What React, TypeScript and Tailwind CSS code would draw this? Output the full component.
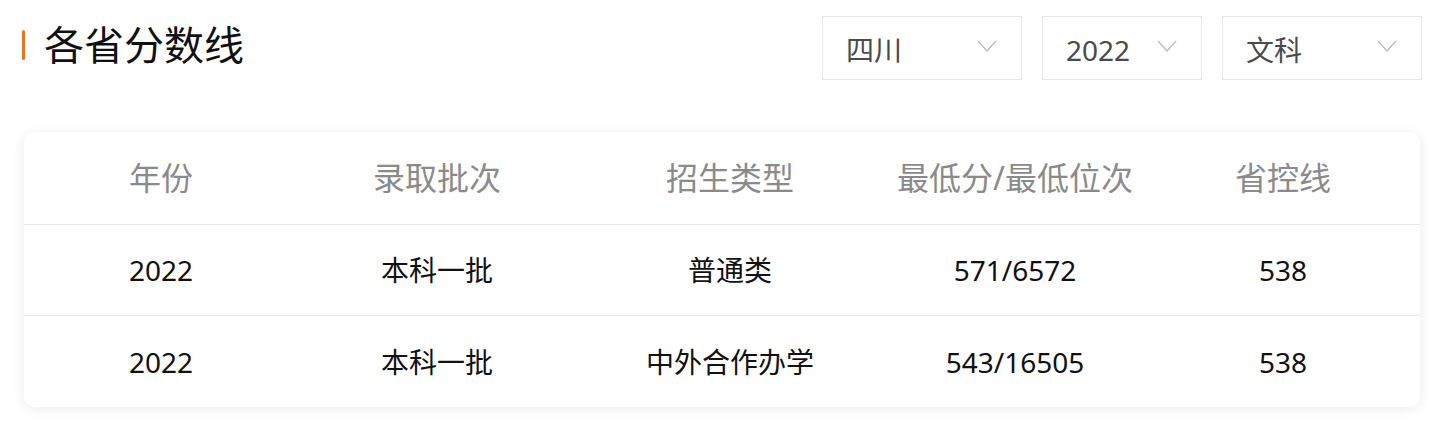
import React from "react";

const font = { fontFamily: '"Noto Sans", "Noto Sans CJK SC", sans-serif' };

function Chevron() {
  return (
    <svg width="20" height="12" viewBox="0 0 20 12" fill="none" className="shrink-0 -mt-[4px]">
      <path d="M1 1 L10 11 L19 1" stroke="#bdbdbd" strokeWidth="1.4" />
    </svg>
  );
}

function Select({ label, w }: { label: string; w: string }) {
  return (
    <div className={`${w} h-[64px] border border-[#e6e6e6] bg-white flex items-center justify-between pl-[23px] pr-[24px]`}>
      <span className="text-[28px] text-[#4a4a4a] leading-none mt-[4px]">{label}</span>
      <Chevron />
    </div>
  );
}

const cols = "grid grid-cols-[274px_278px_308px_262px_274px]";

const rows = [
  ["2022", "本科一批", "普通类", "571/6572", "538"],
  ["2022", "本科一批", "中外合作办学", "543/16505", "538"],
];

export default function App() {
  return (
    <div className="w-[1447px] h-[429px] bg-white relative" style={font}>
      <div className="flex items-start justify-between pl-[22px] pr-[25px] pt-[16px]">
        <div className="flex items-center pt-[9px]">
          <div className="w-[3px] h-[30px] bg-[#f07020] rounded-sm" />
          <div className="ml-[19px] text-[40px] leading-none text-[#111]">各省分数线</div>
        </div>
        <div className="flex gap-[20px]">
          <Select label="四川" w="w-[200px]" />
          <Select label="2022" w="w-[160px]" />
          <Select label="文科" w="w-[200px]" />
        </div>
      </div>
      <div className="mx-[24px] mt-[52px] w-[1396px] bg-white rounded-[10px] shadow-[0_2px_14px_rgba(0,0,0,0.08)] overflow-hidden">
        <div className={`${cols} h-[93px] items-center border-b border-[#e8e8e8]`}>
          {["年份", "录取批次", "招生类型", "最低分/最低位次", "省控线"].map((h) => (
            <div key={h} className="text-center text-[32px] text-[#8a8a8a] leading-none">{h}</div>
          ))}
        </div>
        {rows.map((r, i) => (
          <div key={i} className={`${cols} h-[91px] items-center ${i === 0 ? "border-b border-[#e8e8e8]" : ""}`}>
            {r.map((c, j) => (
              <div key={j} className="text-center text-[28px] text-[#111] leading-none">{c}</div>
            ))}
          </div>
        ))}
      </div>
    </div>
  );
}
